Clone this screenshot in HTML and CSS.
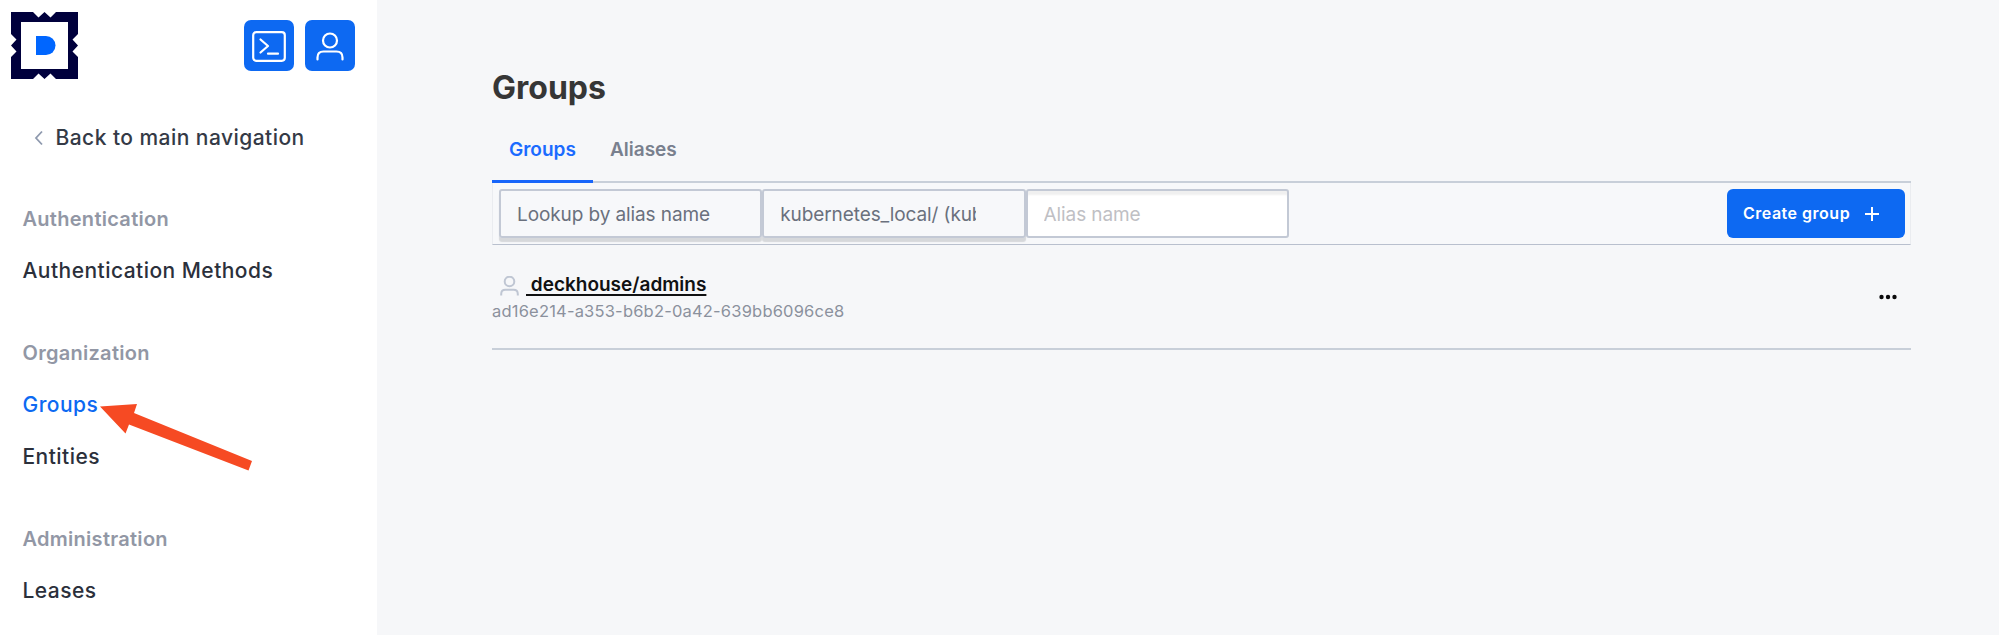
FILE: index.html
```html
<!DOCTYPE html>
<html lang="en">
<head>
<meta charset="utf-8">
<title>Groups</title>
<link rel="stylesheet" href="styles.css">
</head>
<body>
<div class="app">
  <aside class="sidebar">
    <header class="brand">
      <svg class="logo" viewBox="0 0 67 67" width="67" height="67">
        <path fill="#00003c" fill-rule="evenodd" d="M0 0H22L27.500 5.500L33.500 0L39.500 5.500L45 0H67V22L61.500 27.500L67 33.500L61.500 39.500L67 45V67H45L39.500 61.500L33.500 67L27.500 61.500L22 67H0V45L5.500 39.500L0 33.500L5.500 27.500L0 22ZM10 10V57H57V10Z"/>
        <path fill="#0066ff" d="M25 24H35A9.500 9.500 0 0 1 35 43H25Z"/>
      </svg>
      <div class="actions">
        <button class="square" aria-label="Console">
          <svg viewBox="0 0 50 50" width="50" height="50"><rect x="9.200" y="11.200" width="31.600" height="28.600" rx="3"/><path d="M16.500 18.500L24 25L16.500 31.500M24 32.700H34"/></svg>
        </button>
        <button class="square" aria-label="User">
          <svg viewBox="0 0 50 50" width="50" height="50"><circle cx="25" cy="19.500" r="7"/><path d="M12.500 38.500V36.500Q12.500 30.500 18.500 30.500H31.500Q37.500 30.500 37.500 36.500V38.500"/></svg>
        </button>
      </div>
    </header>
    <a class="back"><svg viewBox="0 0 10 16" width="10" height="16"><path d="M8 1.500L2 8L8 14.500"/></svg><span>Back to main navigation</span></a>
    <nav>
      <section class="group">
        <h2 class="heading">Authentication</h2>
        <a class="item">Authentication Methods</a>
      </section>
      <section class="group">
        <h2 class="heading">Organization</h2>
        <a class="item active">Groups</a>
        <a class="item">Entities</a>
      </section>
      <section class="group">
        <h2 class="heading">Administration</h2>
        <a class="item">Leases</a>
      </section>
    </nav>
    <svg class="pointer" viewBox="0 0 152 68" width="152" height="68"><path fill="#f64a23" d="M0 2.500L37 0L34 9L152 57L148.500 66.500L29 20.500L25.500 29.500Z"/></svg>
  </aside>
  <main class="main">
    <h1 class="title">Groups</h1>
    <div class="tabs"><a class="tab selected">Groups</a><a class="tab">Aliases</a></div>
    <div class="toolbar">
      <div class="field select"><span>Lookup by alias name</span></div>
      <div class="field select"><span>kubernetes_local/ (kub</span></div>
      <div class="field input"><span>Alias name</span></div>
      <button class="create"><span>Create group</span><svg viewBox="0 0 14 14" width="14" height="14"><path d="M7 0V14M0 7H14"/></svg></button>
    </div>
    <div class="row">
      <div class="info">
        <div class="name"><svg viewBox="0 0 20 20" width="20" height="20"><circle cx="9.500" cy="5.500" r="4.800"/><path d="M1.200 19.500V18Q1.200 13.800 5.400 13.800H13.600Q17.800 13.800 17.800 18V19.500"/></svg><a class="link">&nbsp;deckhouse/admins</a></div>
        <div class="uuid">ad16e214-a353-b6b2-0a42-639bb6096ce8</div>
      </div>
      <svg class="dots" viewBox="0 0 18 6" width="18" height="6"><circle cx="2.500" cy="3" r="2.200"/><circle cx="9" cy="3" r="2.200"/><circle cx="15.500" cy="3" r="2.200"/></svg>
    </div>
  </main>
</div>
</body>
</html>
```
FILE: styles.css
```css
* { box-sizing: border-box; }
body { margin: 0; font-family: Inter, sans-serif; background: #f6f7f9; }
button { border: 0; padding: 0; font-family: inherit; }
svg { display: block; flex: none; }
.app { display: flex; height: 635px; overflow: hidden; }
.sidebar { position: relative; width: 377px; flex: none; background: #fff; }
.brand { display: flex; justify-content: space-between; height: 111px; padding: 12px 22px 0 11px; }
.actions { display: flex; gap: 11px; padding-top: 8px; }
.square { width: 50px; height: 51px; border-radius: 7px; background: #0d69f2; }
.square svg { fill: none; stroke: #fff; stroke-width: 2.200; stroke-linecap: round; stroke-linejoin: round; }
.back { display: flex; align-items: center; gap: 11.500px; height: 53px; padding-left: 34px; font-size: 21px; font-weight: 500; letter-spacing: 0.450px; color: #343a46; white-space: nowrap; }
.back svg { fill: none; stroke: #8e99ae; stroke-width: 1.800; }
nav { padding: 29.500px 22px 0 22.500px; }
.group { margin-bottom: 30px; }
.heading, .item { display: flex; align-items: center; margin: 0; white-space: nowrap; }
.heading { height: 51px; font-size: 20px; font-weight: 600; letter-spacing: 0.280px; color: #9297a5; }
.item { height: 52.500px; font-size: 21px; font-weight: 500; letter-spacing: 0.460px; color: #2b303b; }
.active { color: #0d69f2; }
.pointer { position: absolute; left: 100px; top: 404px; }
.main { width: 1419px; margin-left: 115px; padding-top: 64px; }
.title { margin: 0; height: 48px; font-size: 32px; line-height: 48px; font-weight: 700; color: #363636; }
.tabs { display: flex; height: 71px; border-bottom: 2px solid #c8cfd9; }
.tab { height: 71px; padding: 28px 17px 0; font-size: 19px; line-height: 20px; font-weight: 600; color: #79808e; }
.selected { width: 101px; color: #1b6bff; border-bottom: 3px solid #1765fa; }
.toolbar { display: flex; height: 62px; padding: 6px 5px 0 6px; border: 1px solid #eaecf0; border-top: 0; border-bottom: 1px solid #b9c0ce; background: #f7f8fa; }
.field { display: flex; align-items: center; width: 263.300px; height: 49px; padding: 2px 0 0 16px; border: 2px solid #c3c9d5; border-radius: 3px; font-size: 19px; letter-spacing: -0.100px; color: #6a707d; }
.field span { display: block; width: 196px; overflow: hidden; white-space: nowrap; line-height: 28px; }
.select { box-shadow: 0 4px 1px #d6d8db; }
.input { background: #fff; color: #bfc0c4; box-shadow: inset 0 5px 2px -1px #f0f0f0; }
.create { display: flex; align-items: center; gap: 14.500px; width: 178px; height: 49px; margin-left: auto; padding: 0 0 2px 16px; border-radius: 6px; background: #0d69f2; color: #fff; font-size: 16px; font-weight: 600; letter-spacing: 0.500px; }
.create svg { stroke: #fff; stroke-width: 2; margin-top: 2px; }
.row { display: flex; justify-content: space-between; height: 105px; border-bottom: 2px solid #c8cfd9; padding: 26px 14px 0 0; }
.name { display: flex; height: 28px; line-height: 28px; font-size: 19px; font-weight: 600; color: #101112; padding-left: 7.500px; gap: 6.500px; }
.name svg { margin-top: 5px; fill: none; stroke: #bfc6d3; stroke-width: 2; }
.link { text-decoration: underline; text-underline-offset: 3px; text-decoration-thickness: 1.500px; white-space: pre; }
.uuid { height: 26px; line-height: 25px; font-size: 16.500px; letter-spacing: 0.190px; color: #8b919d; }
.dots { margin-top: 23px; fill: #0b0b0c; }
```
